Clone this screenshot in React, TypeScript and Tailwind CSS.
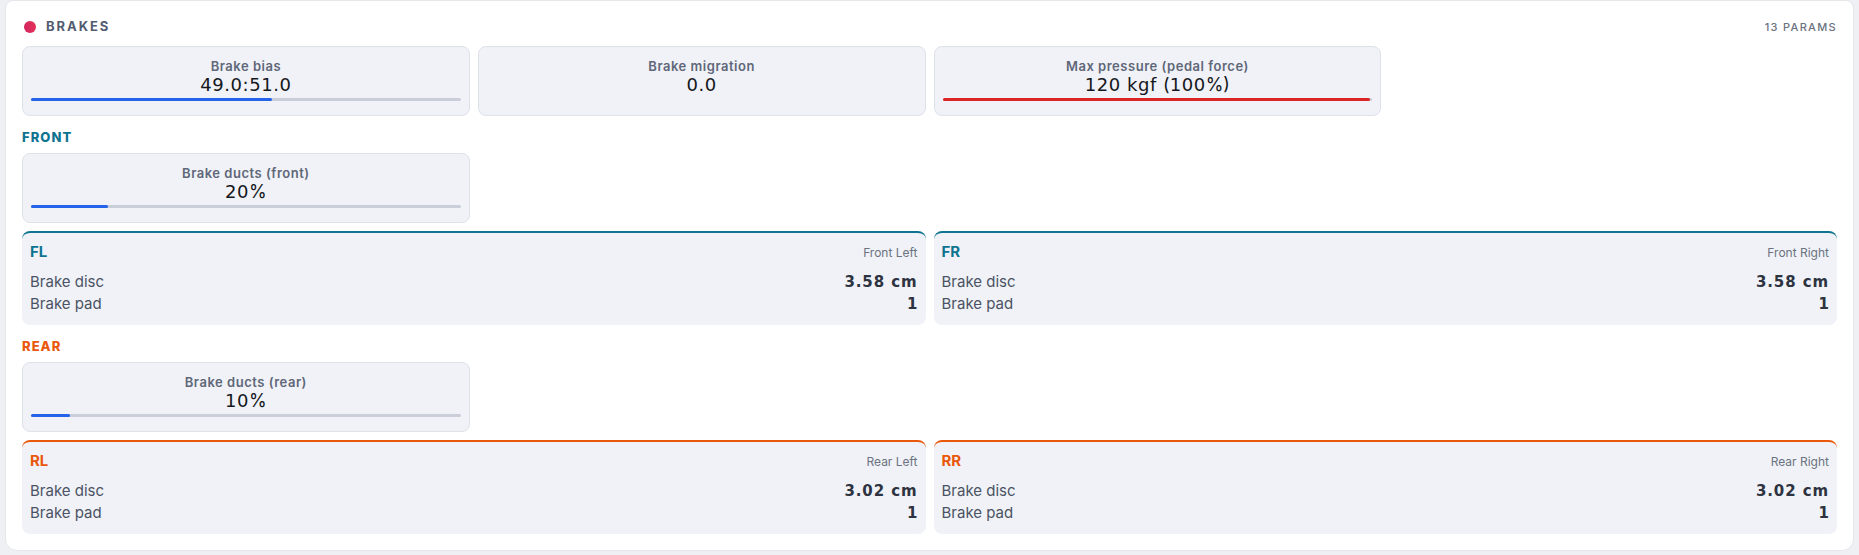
import React from 'react';

type Param = { label: string; value: string; pct?: number; bar?: string };
type Wheel = { code: string; name: string; disc: string; pad: string };

const topParams: Param[] = [
  { label: 'Brake bias', value: '49.0:51.0', pct: 56, bar: 'bg-[#2563eb]' },
  { label: 'Brake migration', value: '0.0' },
  { label: 'Max pressure (pedal force)', value: '120 kgf (100%)', pct: 99.4, bar: 'bg-[#dc2626]' },
];

const front: Wheel[] = [
  { code: 'FL', name: 'Front Left', disc: '3.58 cm', pad: '1' },
  { code: 'FR', name: 'Front Right', disc: '3.58 cm', pad: '1' },
];

const rear: Wheel[] = [
  { code: 'RL', name: 'Rear Left', disc: '3.02 cm', pad: '1' },
  { code: 'RR', name: 'Rear Right', disc: '3.02 cm', pad: '1' },
];

const Value = ({ text }: { text: string }) => (
  <>
    {text.split(/([%()])/).map((part, i) =>
      /^[%()]$/.test(part) ? (
        <span key={i} className="font-['Inter',sans-serif] font-normal tracking-normal">
          {part}
        </span>
      ) : (
        <span key={i}>{part}</span>
      )
    )}
  </>
);

const ParamCard: React.FC<Param> = ({ label, value, pct, bar }) => (
  <div className="rounded-lg border border-[#dde1e9] bg-[#f0f2f7] px-2 pt-[11px] pb-[14px]">
    <div className="text-center text-[13px] leading-4 font-semibold tracking-[0.04em] text-[#5f6779]">
      {label}
    </div>
    <div className="text-center font-['DejaVu_Sans',sans-serif] text-[18px] leading-[22px] tracking-[0.03em] text-[#15171c]">
      <Value text={value} />
    </div>
    {pct !== undefined && (
      <div className="mt-[2px] h-[3px] w-full rounded-full bg-[#c9ced9]">
        <div className={`h-full rounded-full ${bar}`} style={{ width: `${pct}%` }} />
      </div>
    )}
  </div>
);

const WheelCard: React.FC<Wheel & { accent: string; text: string }> = ({
  code,
  name,
  disc,
  pad,
  accent,
  text,
}) => (
  <div className={`rounded-lg border-t-2 ${accent} bg-[#f0f2f7] px-2 pt-[9px] pb-[10px]`}>
    <div className="flex items-baseline justify-between leading-5">
      <span className={`text-[15px] font-bold ${text}`}>{code}</span>
      <span className="text-[12px] text-[#6b7280]">{name}</span>
    </div>
    <div className="mt-[8px] text-[15px] leading-[22px] text-[#4b5263]">
      <div className="flex items-center justify-between">
        <span>Brake disc</span>
        <span className="font-['DejaVu_Sans',sans-serif] text-[15px] font-bold tracking-[0.06em] text-[#2d3340]">
          {disc}
        </span>
      </div>
      <div className="flex items-center justify-between">
        <span>Brake pad</span>
        <span className="font-['DejaVu_Sans',sans-serif] text-[15px] font-bold text-[#2d3340]">{pad}</span>
      </div>
    </div>
  </div>
);

const Section: React.FC<{
  title: string;
  color: string;
  accent: string;
  duct: Param;
  wheels: Wheel[];
}> = ({ title, color, accent, duct, wheels }) => (
  <div className="mt-[13px]">
    <div className={`text-[13px] leading-4 font-extrabold tracking-[0.08em] ${color}`}>{title}</div>
    <div className="mt-2 grid grid-cols-4 gap-2">
      <ParamCard {...duct} />
    </div>
    <div className="mt-2 grid grid-cols-2 gap-2">
      {wheels.map((w) => (
        <WheelCard key={w.code} {...w} accent={accent} text={color} />
      ))}
    </div>
  </div>
);

export default function App() {
  return (
    <div className="min-h-screen bg-[#eef0f4] px-[5px] pb-[4px] font-['Inter',sans-serif]">
      <div className="rounded-b-xl rounded-t-lg border border-[#e5e7eb] bg-white p-4">
        <div className="mb-[9px] flex h-5 items-center justify-between">
          <div className="flex items-center gap-[10px] pl-[2px]">
            <span className="h-3 w-3 rounded-full bg-gradient-to-r from-[#d1245e] to-[#e4335a]" />
            <span className="text-[13px] font-bold tracking-[0.15em] text-[#525c70]">BRAKES</span>
          </div>
          <span className="text-[11px] font-medium tracking-[0.12em] text-[#6b7280]">13 PARAMS</span>
        </div>

        <div className="grid grid-cols-4 gap-2">
          {topParams.map((p) => (
            <ParamCard key={p.label} {...p} />
          ))}
        </div>

        <Section
          title="FRONT"
          color="text-[#0e7490]"
          accent="border-[#0e7490]"
          duct={{ label: 'Brake ducts (front)', value: '20%', pct: 18, bar: 'bg-[#2563eb]' }}
          wheels={front}
        />
        <div className="mt-[4px]">
          <Section
            title="REAR"
            color="text-[#ea580c]"
            accent="border-[#ea580c]"
            duct={{ label: 'Brake ducts (rear)', value: '10%', pct: 9, bar: 'bg-[#2563eb]' }}
            wheels={rear}
          />
        </div>
      </div>
    </div>
  );
}
